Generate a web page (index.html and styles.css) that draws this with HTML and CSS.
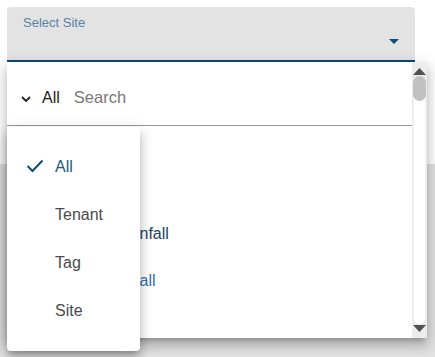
FILE: index.html
```html
<!DOCTYPE html>
<html lang="en">
  <head>
    <meta charset="UTF-8" />
    <meta name="viewport" content="width=device-width, initial-scale=1.0" />
    <title>Select Site</title>
    <link rel="stylesheet" href="styles.css">
  </head>
  <body>
    <div class="page">
      <div class="top-area">
        <div class="field">
          <span class="field-label">Select Site</span>
          <svg class="field-caret" width="10" height="5" viewBox="0 0 10 5">
            <path d="M0 0 L10 0 L5 5 Z" fill="#0d4f7c" />
          </svg>
        </div>
      </div>
      <div class="bottom-area"></div>

      <!-- site dropdown panel -->
      <div class="panel">
        <div class="panel-body">
          <div class="search-row">
            <svg class="filter-chevron" width="10" height="6" viewBox="0 0 10 6">
              <path d="M1 1 L5 5 L9 1" fill="none" stroke="#222" stroke-width="1.8" />
            </svg>
            <span class="filter-value">All</span>
            <input class="search-input" type="text" placeholder="Search" />
          </div>
          <div class="site-list">
            <div class="site-item">All Sites</div>
            <div class="site-item">Monthly Rainfall</div>
            <div class="site-item site-item-hover">Daily Snowfall</div>
            <div class="site-item">Site A</div>
          </div>
        </div>
        <div class="scrollbar">
          <svg width="13" height="7" viewBox="0 0 13 7">
            <path d="M0 7 L6.5 0 L13 7 Z" fill="#505050" />
          </svg>
          <div class="scroll-track">
            <div class="scroll-thumb"></div>
          </div>
          <svg width="13" height="7" viewBox="0 0 13 7">
            <path d="M0 0 L13 0 L6.5 7 Z" fill="#505050" />
          </svg>
        </div>
      </div>

      <!-- filter type menu -->
      <div class="menu">
        <div class="menu-item selected">
          <svg class="menu-check" width="18" height="14" viewBox="0 0 18 14">
            <path d="M1.5 7 L6.5 12 L16.5 1.5" fill="none" stroke="#0f4c75" stroke-width="2" />
          </svg>
          <span>All</span>
        </div>
        <div class="menu-item"><span>Tenant</span></div>
        <div class="menu-item"><span>Tag</span></div>
        <div class="menu-item"><span>Site</span></div>
      </div>
    </div>
  </body>
</html>
```

FILE: styles.css
```css
body {
  margin: 0;
  padding: 0;
  font-family: "Liberation Sans", Arial, sans-serif;
  background-color: #ffffff;
}
.page {
  position: relative;
  width: 435px;
  height: 357px;
  overflow: hidden;
  display: flex;
  flex-direction: column;
}
.top-area {
  height: 164px;
  padding: 7px 20px 0 7px;
  box-sizing: border-box;
  background-color: #ffffff;
}
.bottom-area {
  flex: 1;
  background-color: #e1e1e1;
}

/* Filled select field */
.field {
  height: 55px;
  background-color: #e3e3e3;
  border-radius: 4px 4px 0 0;
  border-bottom: 2px solid #0b4a75;
  box-sizing: border-box;
  display: flex;
  justify-content: space-between;
  padding: 8px 16px 0 16px;
}
.field-label {
  font-size: 13px;
  color: #5684aa;
}
.field-caret {
  margin-top: 24px;
}

/* Dropdown panel (overlays the page) */
.panel {
  position: absolute;
  top: 62px;
  left: 7px;
  width: 420px;
  height: 276px;
  display: flex;
  background-color: #ffffff;
  box-shadow: 0 5px 5px -3px rgba(0, 0, 0, 0.2), 0 8px 10px 1px rgba(0, 0, 0, 0.14),
    0 3px 14px 2px rgba(0, 0, 0, 0.12);
}
.panel-body {
  flex: 1;
  overflow: hidden;
}
.search-row {
  height: 64px;
  display: flex;
  align-items: center;
  padding: 8px 0 0 14px;
  border-bottom: 1px solid #9a9a9a;
  box-sizing: border-box;
}
.filter-chevron {
  margin-top: 2px;
}
.filter-value {
  margin-left: 11px;
  font-size: 16px;
  color: #222;
}
.search-input {
  margin-left: 14px;
  border: none;
  outline: none;
  padding: 0;
  font-family: "Liberation Sans", Arial, sans-serif;
  font-size: 16.5px;
  color: #222;
  background: transparent;
  width: 300px;
}
.search-input::placeholder {
  color: #777777;
}
.site-list {
  padding-top: 37px;
}
.site-item {
  height: 47px;
  line-height: 47px;
  padding-left: 48px;
  font-size: 16px;
  color: #22416d;
}
.site-item-hover {
  color: #2f6fb8;
}

/* Scrollbar */
.scrollbar {
  width: 15px;
  background-color: #ececec;
  display: flex;
  flex-direction: column;
  align-items: center;
  padding: 6px 0;
  box-sizing: border-box;
}
.scroll-track {
  flex: 1;
  width: 13px;
  margin: 1px 0 0;
  background-color: #ffffff;
  border-radius: 7px;
  box-shadow: inset 0 0 2px rgba(0, 0, 0, 0.18);
}
.scroll-thumb {
  height: 25px;
  background-color: #c1c1c1;
  border-radius: 7px;
}

/* Filter type menu */
.menu {
  position: absolute;
  top: 127px;
  left: 7px;
  width: 133px;
  padding: 16px 0;
  background-color: #ffffff;
  border-radius: 4px;
  box-shadow: 0 5px 5px -3px rgba(0, 0, 0, 0.2), 0 8px 10px 1px rgba(0, 0, 0, 0.14),
    0 3px 14px 2px rgba(0, 0, 0, 0.12);
}
.menu-item {
  height: 48px;
  display: flex;
  align-items: center;
  padding-left: 48px;
  position: relative;
  font-size: 16px;
  color: #4a4a4a;
}
.menu-item.selected {
  color: #1d5a85;
}
.menu-check {
  position: absolute;
  left: 19px;
  top: 16px;
}
```
